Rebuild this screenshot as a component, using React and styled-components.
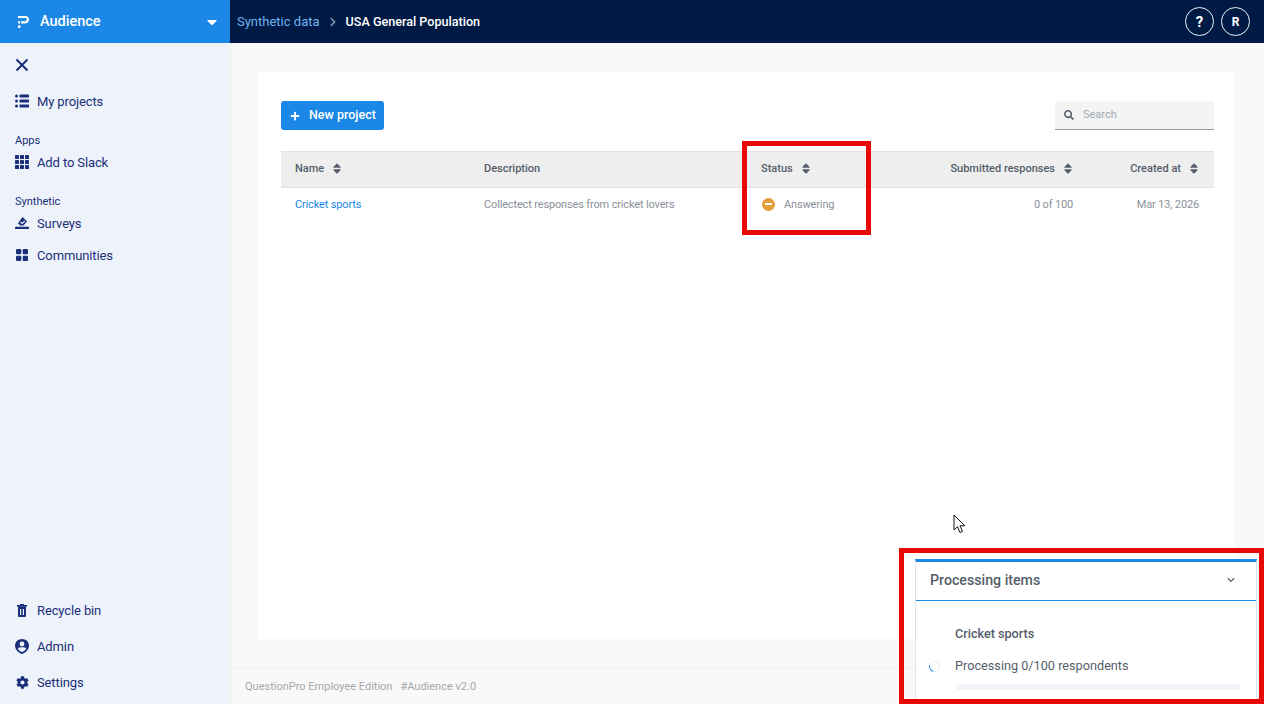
import styled, {createGlobalStyle} from "styled-components";
import {FaCog, FaSearch, FaCaretDown, FaPlus, FaChevronDown, FaChevronRight, FaSort} from "react-icons/fa";

const GlobalStyle = createGlobalStyle`
  html, body {
    margin: 0;
    height: 100%;
    overflow: hidden;
  }
  body {
    font-family: "Roboto", "Noto Sans", sans-serif;
    font-size: 13px;
    color: #545e6b;
  }
  * {
    box-sizing: border-box;
  }
`;

const CloseIcon = () => (
    <svg width="14" height="14" viewBox="0 0 14 14" stroke="currentColor" strokeWidth="2" fill="none">
        <path d="M1.500 1.500 12.500 12.500M12.500 1.500 1.500 12.500"/>
    </svg>
);

const ListIcon = () => (
    <svg width="14" height="14" viewBox="0 0 14 14" fill="currentColor">
        <circle cx="1.500" cy="2" r="1.500"/>
        <circle cx="1.500" cy="7" r="1.500"/>
        <circle cx="1.500" cy="12" r="1.500"/>
        <rect x="4.500" y="0.600" width="9.500" height="2.800" rx="0.400"/>
        <rect x="4.500" y="5.600" width="9.500" height="2.800" rx="0.400"/>
        <rect x="4.500" y="10.600" width="9.500" height="2.800" rx="0.400"/>
    </svg>
);

const GridIcon = () => (
    <svg width="14" height="14" viewBox="0 0 14 14" fill="currentColor">
        {[0, 5, 10].map((y) => [0, 5, 10].map((x) => (
            <rect key={`${x}-${y}`} x={x} y={y} width="4" height="4" rx="0.400"/>
        )))}
    </svg>
);

const SurveyIcon = () => (
    <svg width="14" height="14" viewBox="0 0 14 14">
        <path d="M7.500 1 12 5.300 8.500 9.500H5.200L3 7.300z" fill="currentColor"/>
        <path d="M5.500 6 7.200 7.500 9.800 4.800" stroke="#eef3fb" strokeWidth="1.100" fill="none"/>
        <rect x="0" y="10.800" width="14" height="2.200" rx="0.400" fill="currentColor"/>
    </svg>
);

const CommunitiesIcon = () => (
    <svg width="12" height="12" viewBox="0 0 12 12" fill="currentColor">
        <rect x="0" y="0" width="5.300" height="5.300" rx="1.200"/>
        <rect x="6.700" y="0" width="5.300" height="5.300" rx="1.200"/>
        <rect x="0" y="6.700" width="5.300" height="5.300" rx="1.200"/>
        <rect x="6.700" y="6.700" width="5.300" height="5.300" rx="1.200"/>
    </svg>
);

const TrashIcon = () => (
    <svg width="10" height="13" viewBox="0 0 10 13" fill="currentColor">
        <rect x="0" y="1" width="10" height="1.800" rx="0.300"/>
        <rect x="3" y="0" width="4" height="2"/>
        <path d="M1 2.800h8V12a1 1 0 0 1-1 1H2a1 1 0 0 1-1-1z"/>
        <rect x="3" y="5" width="1.200" height="6" fill="#eef3fb"/>
        <rect x="5.800" y="5" width="1.200" height="6" fill="#eef3fb"/>
    </svg>
);

const AdminIcon = () => (
    <svg width="14" height="15" viewBox="0 0 14 15" fill="currentColor">
        <path d="M7 0C10.800 0 14 2.800 14 6.500 14 10.500 10.800 13.700 7 15 3.200 13.700 0 10.500 0 6.500 0 2.800 3.200 0 7 0z"/>
        <circle cx="7" cy="5" r="2.400" fill="#eef3fb"/>
        <path d="M2.800 9.400C4 8 10 8 11.200 9.400 10.400 11.100 8.800 12.400 7 13.100 5.200 12.400 3.600 11.100 2.800 9.400z" fill="#eef3fb"/>
    </svg>
);

const Logo = () => (
    <svg width="11" height="12" viewBox="0 0 11 12" fill="#fff">
        <path d="M0 0h7.500C9.500 0 11 1.500 11 3.500S9.500 7.400 7.500 7.400H3.200V5.300h4C8.100 5.300 8.700 4.500 8.700 3.600S8.100 2.100 7.200 2.100H0z"/>
        <rect x="0" y="5.300" width="2.200" height="2.100"/>
        <rect x="0" y="9.300" width="2.400" height="2.700"/>
    </svg>
);

const Cursor = () => (
    <svg width="13" height="20" viewBox="0 0 13 20">
        <path d="M1 1v15l3.500-3.300 2.400 5.800 2.600-1.100-2.500-5.600h4.800z" fill="#fff" stroke="#111" strokeWidth="1"/>
    </svg>
);

const bottomLinks = [
    {label: "Recycle bin", icon: <TrashIcon/>},
    {label: "Admin", icon: <AdminIcon/>},
    {label: "Settings", icon: <FaCog size={13}/>},
];

const App = () => {
    return (
        <Page>
            <GlobalStyle/>
            <Sidebar>
                <Brand>
                    <Logo/>
                    <BrandName>Audience</BrandName>
                    <FaCaretDown size={16}/>
                </Brand>
                <SideNav>
                    <CloseButton><CloseIcon/></CloseButton>
                    <SideLink><IconSlot><ListIcon/></IconSlot>My projects</SideLink>
                    <SideHeading>Apps</SideHeading>
                    <SideLink $tight><IconSlot><GridIcon/></IconSlot>Add to Slack</SideLink>
                    <SideHeading>Synthetic</SideHeading>
                    <SideLink $tight><IconSlot><SurveyIcon/></IconSlot>Surveys</SideLink>
                    <SideLink><IconSlot><CommunitiesIcon/></IconSlot>Communities</SideLink>
                </SideNav>
                <SideBottom>
                    {bottomLinks.map((link) => (
                        <SideLink key={link.label}><IconSlot>{link.icon}</IconSlot>{link.label}</SideLink>
                    ))}
                </SideBottom>
            </Sidebar>
            <Column>
                <TopBar>
                    <Crumbs>
                        <CrumbLink>Synthetic data</CrumbLink>
                        <FaChevronRight size={10} color="#8a94a6"/>
                        <CrumbCurrent>USA General Population</CrumbCurrent>
                    </Crumbs>
                    <TopActions>
                        <RoundButton $big>?</RoundButton>
                        <RoundButton>R</RoundButton>
                    </TopActions>
                </TopBar>
                <Content>
                    <Card>
                        <Toolbar>
                            <NewButton><FaPlus size={10}/><span>New project</span></NewButton>
                            <SearchBox>
                                <FaSearch size={10}/>
                                <span>Search</span>
                            </SearchBox>
                        </Toolbar>
                        <Table>
                            <thead>
                                <tr>
                                    <Th $w={189}>Name<SortIcon/></Th>
                                    <Th $w={277}>Description</Th>
                                    <Th $w={159}>Status<SortIcon/></Th>
                                    <Th $w={182} $right>Submitted responses<SortIcon/></Th>
                                    <Th $right>Created at<SortIcon/></Th>
                                </tr>
                            </thead>
                            <tbody>
                                <tr>
                                    <Td><ProjectLink>Cricket sports</ProjectLink></Td>
                                    <Td>Collectect responses from cricket lovers</Td>
                                    <Td>
                                        <StatusCell>
                                            <StatusDot><i/></StatusDot>
                                            Answering
                                        </StatusCell>
                                    </Td>
                                    <Td $right>0 of 100</Td>
                                    <Td $right>Mar 13, 2026</Td>
                                </tr>
                            </tbody>
                        </Table>
                    </Card>
                </Content>
                <Footer>
                    <span>QuestionPro Employee Edition</span>
                    <span>#Audience v2.0</span>
                </Footer>
            </Column>

            <ProcessingPanel>
                <PanelHeader>
                    <PanelTitle>Processing items</PanelTitle>
                    <FaChevronDown size={8}/>
                </PanelHeader>
                <PanelBody>
                    <ItemName>Cricket sports</ItemName>
                    <ItemRow>
                        <Spinner/>
                        <span>Processing 0/100 respondents</span>
                    </ItemRow>
                    <ProgressTrack/>
                </PanelBody>
            </ProcessingPanel>

            <Highlight $x={742} $y={141} $w={129} $h={94}/>
            <Highlight $x={899} $y={548} $w={365} $h={156}/>
            <CursorSpot><Cursor/></CursorSpot>
        </Page>
    );
};

export default App;

const SortIcon = styled(FaSort)`
  width: 10px;
  height: 13px;
  margin-left: 8px;
  vertical-align: -3px;
  color: #545e6b;
`;

const Page = styled.div`
  position: relative;
  display: flex;
  width: 1264px;
  height: 704px;
  overflow: hidden;
  background: #f9f9f9;
`;

const Sidebar = styled.aside`
  display: flex;
  flex-direction: column;
  flex: 0 0 230px;
  background: #eef3fb;
  color: #1b2f78;
  box-shadow: 1px 0 3px rgba(0, 0, 0, 0.06);
  z-index: 1;
`;

const Brand = styled.div`
  display: flex;
  align-items: center;
  height: 43px;
  padding: 0 10px 0 18px;
  background: #1b87e6;
  color: #fff;
`;

const BrandName = styled.span`
  flex: 1;
  margin-left: 11px;
  font-size: 14.500px;
  font-weight: 500;
`;

const SideNav = styled.nav`
  flex: 1;
  padding: 15px 15px 0;
`;

const CloseButton = styled.div`
  display: flex;
  height: 14px;
  margin-bottom: 21px;
`;

const IconSlot = styled.span`
  display: flex;
  align-items: center;
  justify-content: center;
  flex: 0 0 14px;
  margin-right: 8px;
`;

const SideLink = styled.div`
  display: flex;
  align-items: center;
  height: 16px;
  margin-bottom: ${({$tight}) => ($tight ? "16px" : "0")};
  font-size: 13px;
  letter-spacing: -0.12px;
`;

const SideHeading = styled.div`
  margin: 25px 0 7px;
  font-size: 11px;
  line-height: 13px;
`;

const SideBottom = styled.div`
  display: flex;
  flex-direction: column;
  gap: 20px;
  padding: 0 15px 14px;
`;

const Column = styled.div`
  display: flex;
  flex-direction: column;
  flex: 1;
  min-width: 0;
`;

const TopBar = styled.header`
  display: flex;
  align-items: center;
  justify-content: space-between;
  flex: 0 0 43px;
  padding: 0 14px 0 7px;
  background: #001a46;
`;

const Crumbs = styled.div`
  display: flex;
  align-items: center;
  gap: 8px;
  font-size: 13px;
`;

const CrumbLink = styled.span`
  color: #6fb3ec;
`;

const CrumbCurrent = styled.span`
  color: #fff;
  font-size: 12.600px;
  font-weight: 500;
`;

const TopActions = styled.div`
  display: flex;
  gap: 7px;
`;

const RoundButton = styled.div`
  display: flex;
  align-items: center;
  justify-content: center;
  width: 29px;
  height: 29px;
  border: 1.500px solid #f2f4f8;
  border-radius: 50%;
  color: #fff;
  font-size: ${({$big}) => ($big ? "15px" : "12px")};
  font-weight: 700;
`;

const Content = styled.main`
  flex: 1;
  padding: 29px 29px 29px;
`;

const Card = styled.section`
  height: 100%;
  padding: 29px 21px 0 22px;
  background: #fff;
`;

const Toolbar = styled.div`
  display: flex;
  align-items: center;
  justify-content: space-between;
  height: 29px;
  margin-bottom: 21px;
`;

const NewButton = styled.button`
  display: flex;
  align-items: center;
  gap: 9px;
  width: 103px;
  height: 29px;
  padding: 0 0 0 9px;
  border: 0;
  border-radius: 3px;
  background: #1b87e6;
  color: #fff;
  font-family: inherit;
  font-size: 12.500px;
  font-weight: 500;
  white-space: nowrap;

  span {
    margin-top: -2px;
  }
`;

const SearchBox = styled.div`
  display: flex;
  align-items: center;
  gap: 9px;
  width: 159px;
  height: 29px;
  padding-left: 9px;
  border-bottom: 1px solid #999;
  background: #f4f4f4;
  color: #545e6b;
  font-size: 11px;

  span {
    color: #a3a9b3;
    margin-top: -1px;
  }
`;

const Table = styled.table`
  width: 100%;
  border-collapse: collapse;
  table-layout: fixed;
`;

const Th = styled.th`
  width: ${({$w}) => ($w ? `${$w}px` : "auto")};
  height: 36px;
  padding: 0 15px 2px 14px;
  border-top: 1px solid #e2e2e2;
  border-bottom: 1px solid #e2e2e2;
  background: #eeeeee;
  color: #545e6b;
  font-size: 11px;
  font-weight: 500;
  text-align: ${({$right}) => ($right ? "right" : "left")};
`;

const Td = styled.td`
  height: 33px;
  padding: 0 15px 0 14px;
  color: #8b9099;
  font-size: 11px;
  letter-spacing: -0.15px;
  text-align: ${({$right}) => ($right ? "right" : "left")};
`;

const ProjectLink = styled.a`
  color: #1b87e6;
`;

const StatusCell = styled.span`
  display: flex;
  align-items: center;
  gap: 9px;
`;

const StatusDot = styled.span`
  display: flex;
  align-items: center;
  justify-content: center;
  width: 13px;
  height: 13px;
  margin-left: 1px;
  border-radius: 50%;
  background: #e59e3b;

  i {
    width: 7px;
    height: 2px;
    background: #fff;
  }
`;

const Footer = styled.footer`
  display: flex;
  align-items: center;
  gap: 8px;
  flex: 0 0 36px;
  padding: 0 0 1px 15px;
  border-top: 1px solid #f0f0f0;
  color: #a8a8a8;
  font-size: 11px;
`;

const ProcessingPanel = styled.div`
  position: absolute;
  left: 915px;
  top: 559px;
  width: 342px;
  height: 145px;
  border: 1px solid #dde4ec;
  border-top: 3px solid #1b87e6;
  background: #fff;
  z-index: 2;
`;

const PanelHeader = styled.div`
  display: flex;
  align-items: center;
  justify-content: space-between;
  height: 39px;
  padding: 0 21px 2px 14px;
  border-bottom: 1px solid #1b87e6;
  color: #545e6b;
`;

const PanelTitle = styled.span`
  font-size: 14.200px;
  font-weight: 500;
`;

const PanelBody = styled.div`
  padding: 25px 15px 0 13px;
`;

const ItemName = styled.div`
  margin-left: 26px;
  font-size: 12.600px;
  font-weight: 500;
  line-height: 16px;
`;

const ItemRow = styled.div`
  display: flex;
  align-items: center;
  gap: 15px;
  margin-top: 16px;
  font-size: 12.700px;
  line-height: 16px;
`;

const Spinner = styled.span`
  width: 11px;
  height: 11px;
  border: 1.500px solid #e8ecf1;
  border-left-color: #1b87e6;
  border-radius: 50%;
  transform: rotate(-30deg);
`;

const ProgressTrack = styled.div`
  height: 6px;
  margin: 10px 0 0 27px;
  border-radius: 3px;
  background: #f1f4f8;
`;

const Highlight = styled.div`
  position: absolute;
  left: ${({$x}) => $x}px;
  top: ${({$y}) => $y}px;
  width: ${({$w}) => $w}px;
  height: ${({$h}) => $h}px;
  border: 5px solid #e80808;
  z-index: 3;
  pointer-events: none;
`;

const CursorSpot = styled.div`
  position: absolute;
  left: 953px;
  top: 514px;
  z-index: 4;
`;
